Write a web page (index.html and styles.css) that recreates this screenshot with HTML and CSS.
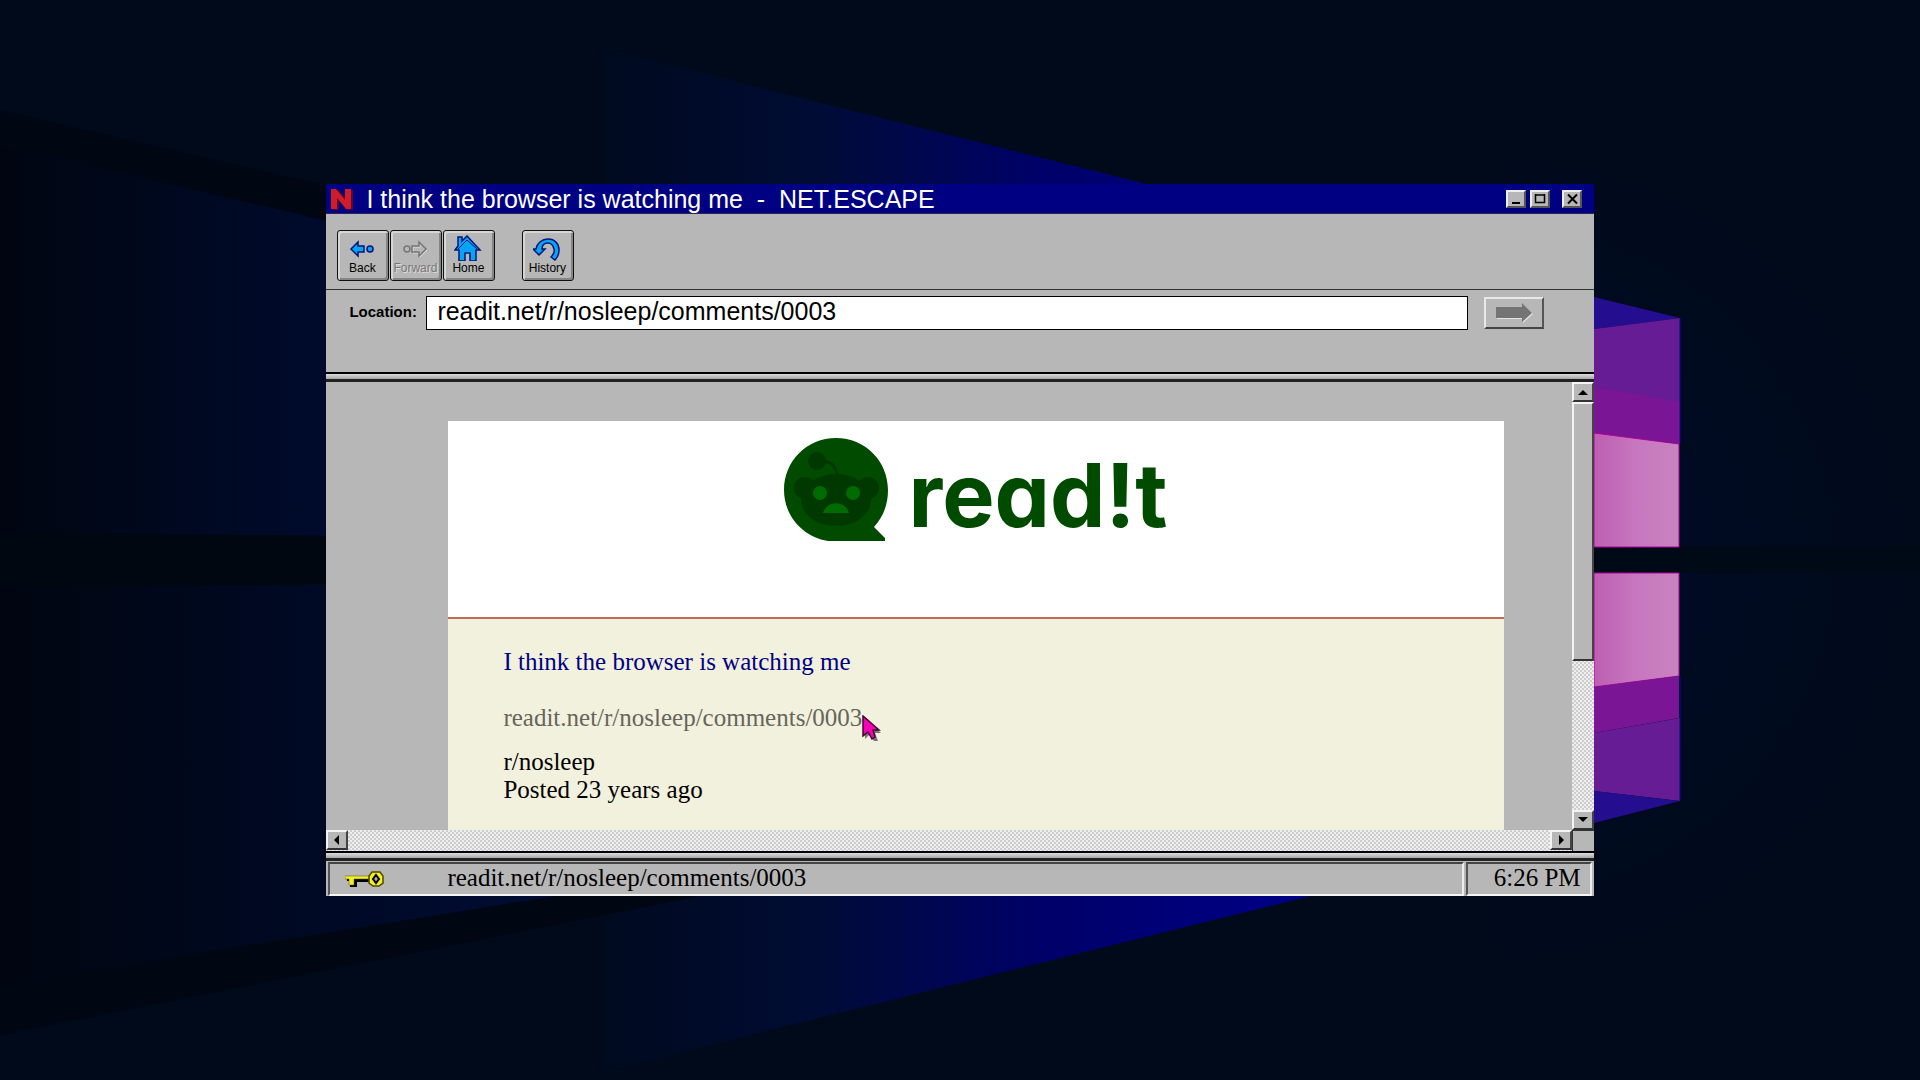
FILE: index.html
```
<!DOCTYPE html>
<html lang="en">
<head>
<meta charset="utf-8">
<title>I think the browser is watching me - NET.ESCAPE</title>
<link rel="stylesheet" href="styles.css">
</head>
<body>
<div class="desktop">
  <svg class="wallpaper" viewBox="0 0 1920 1080" preserveAspectRatio="none" aria-hidden="true">
    <defs>
      <linearGradient id="beam" gradientUnits="userSpaceOnUse" x1="600" y1="0" x2="1320" y2="0">
        <stop offset="0" stop-color="#000a1e"/>
        <stop offset=".3" stop-color="#000c34"/>
        <stop offset=".42" stop-color="#00084a"/>
        <stop offset=".62" stop-color="#000069"/>
        <stop offset="1" stop-color="#000088"/>
      </linearGradient>
      <linearGradient id="left" x1="0" x2="1" y1="0" y2="0">
        <stop offset="0" stop-color="#000510"/>
        <stop offset=".5" stop-color="#000922"/>
        <stop offset="1" stop-color="#000c34"/>
      </linearGradient>
      <linearGradient id="pane" x1="0" x2="1" y1="0" y2="0">
        <stop offset="0" stop-color="#bd5fb3"/>
        <stop offset=".5" stop-color="#c777bf"/>
        <stop offset="1" stop-color="#c884bf"/>
      </linearGradient>
      <radialGradient id="halo" gradientUnits="userSpaceOnUse" cx="1500" cy="560" r="480">
        <stop offset="0" stop-color="#000c30"/>
        <stop offset="1" stop-color="#000a1e" stop-opacity="0"/>
      </radialGradient>
    </defs>
    <rect width="1920" height="1080" fill="#000a1a"/>
    <rect x="1500" width="420" height="1080" fill="url(#halo)"/>
    <path d="M600 48L1311 225V400H600Z" fill="url(#beam)"/>
    <path d="M0 145L410 240V536L0 533Z" fill="url(#left)"/>
    <path d="M0 110L410 205V240L0 145Z" fill="#000713"/>
    <path d="M0 533L326 536V584L0 587Z" fill="#000711"/>
    <path d="M0 587L557 584V896L0 985Z" fill="url(#left)"/>
    <path d="M600 890H1335L600 1072Z" fill="url(#beam)"/>
    <path d="M0 985L557 896H700L0 1035Z" fill="#000713"/>
    <path d="M1594 546H1920V573H1594Z" fill="#000a16"/>
    <path d="M1594 297L1680 318L1594 329Z" fill="#240d8f"/>
    <path d="M1594 329L1680 318V403L1594 388Z" fill="#661c94"/>
    <path d="M1594 387L1680 402V444L1594 433Z" fill="#7a1695"/>
    <path d="M1594 433L1679 444V547H1594Z" fill="url(#pane)" stroke="#b3009c"/>
    <path d="M1594 573H1679V676L1594 687Z" fill="url(#pane)" stroke="#b3009c"/>
    <path d="M1594 687L1679 676V718L1594 733Z" fill="#7a1695"/>
    <path d="M1594 733L1680 718V801L1594 791Z" fill="#661c94"/>
    <path d="M1594 791L1680 801L1594 823Z" fill="#240d8f"/>
    <path d="M1680 318V444M1680 676V801" stroke="#100a90" fill="none"/>
  </svg>

  <main class="window">
    <header class="titlebar">
      <svg class="brand" viewBox="0 0 24 22" aria-hidden="true">
        <path d="M3 2H9L17 12V2H23V22H17L9 12V22H3Z" fill="#5a0730"/>
        <path d="M1 1H6L15 12V1H21V21H16L7 10V21H1Z" fill="#d01c28"/>
      </svg>
      <h1 class="caption">I think the browser is watching me&nbsp; -&nbsp; NET.ESCAPE</h1>
      <div class="controls">
        <button class="control" type="button" aria-label="Minimize"><svg viewBox="0 0 14 12"><path d="M3 10H11" stroke="#000" stroke-width="2"/></svg></button>
        <button class="control" type="button" aria-label="Maximize"><svg viewBox="0 0 14 12"><path d="M2 2H12M2.500 1V9.500H11.500V1" fill="none" stroke="#000" stroke-width="1.500"/></svg></button>
        <button class="control close" type="button" aria-label="Close"><svg viewBox="0 0 14 12"><path d="M3 1.500L12 10.500M12 1.500L3 10.500" stroke="#000" stroke-width="2"/></svg></button>
      </div>
    </header>

    <nav class="toolbar" aria-label="Navigation">
      <button class="tool" type="button">
        <svg viewBox="0 0 28 26"><path d="M3 14L10 7V11H16V17H10V21Z" fill="#08a4f4" stroke="#00147a" stroke-width="1.500"/><circle cx="22" cy="14" r="3" fill="#08a4f4" stroke="#00147a" stroke-width="1.500"/></svg>
        <span>Back</span>
      </button>
      <button class="tool" type="button" disabled>
        <svg viewBox="0 0 28 26"><path d="M26 15L19 8V12H12V18H19V22Z" fill="none" stroke="#ddd"/><g fill="none" stroke="#777" stroke-width="1.500"><path d="M25 14L18 7V11H11V17H18V21Z"/><circle cx="6" cy="14" r="3"/></g></svg>
        <span>Forward</span>
      </button>
      <button class="tool" type="button">
        <svg viewBox="0 0 28 26"><path d="M1 15L4 11V2H8V6L13 1L26 15H22V26H16V18H11V26H5V15Z" fill="#08a4f4" stroke="#00147a" stroke-width="1.500"/><path d="M4 14L13 5L23 14" fill="none" stroke="#00147a"/></svg>
        <span>Home</span>
      </button>
      <button class="tool history" type="button">
        <svg viewBox="0 0 28 26"><path d="M0 14H3C4 8 9 4 15 4C22 4 26 9 26 15C26 20 24 23 22 25L18 22C21 19 22 17 21 14C20 10 18 8 15 8C11 8 9 10 9 14H12L6 20Z" fill="#08a4f4" stroke="#00147a" stroke-width="1.500"/></svg>
        <span>History</span>
      </button>
    </nav>

    <form class="location">
      <label for="url">Location:</label>
      <input id="url" type="text" value="readit.net/r/nosleep/comments/0003">
      <button class="go" type="button" aria-label="Go"><svg viewBox="0 0 38 20"><path d="M2 5H28V1L38 11L28 20V16H2Z" fill="#e4e4e4"/><path d="M1 4H27V0L37 10L27 19V15H1Z" fill="#747474"/></svg></button>
    </form>

    <div class="divider"></div>

    <section class="browser">
      <div class="viewport">
        <article class="page">
          <header class="masthead">
            <svg class="mascot" viewBox="0 0 104 103" aria-hidden="true">
              <path d="M52 0C81 0 104 23 104 52C104 67 99 79 90 89L101 100V103H44C19 99 0 78 0 52C0 23 23 0 52 0Z" fill="#004b00"/>
              <g fill="#003900">
                <ellipse cx="52" cy="62" rx="35" ry="26"/>
                <circle cx="21" cy="50" r="11"/><circle cx="84" cy="50" r="11"/>
                <circle cx="33" cy="23" r="9"/>
              </g>
              <path d="M36 23C48 23 52 28 53 38" fill="none" stroke="#003900" stroke-width="3"/>
              <g fill="#006b00">
                <circle cx="36" cy="55" r="7"/><circle cx="69" cy="55" r="7"/>
                <path d="M39 75C43 62 61 62 65 75Z"/>
              </g>
            </svg>
            <span class="wordmark">read!t</span>
          </header>
          <div class="post">
            <a class="post-title" href="#">I think the browser is watching me</a>
            <p class="post-url">readit.net/r/nosleep/comments/0003<svg class="pointer" viewBox="0 0 20 26" aria-hidden="true"><path d="M3 3V24L8 19L12 26H16L13 18H19Z" fill="#777"/><path d="M1 1V21L6 17L10 24L13 22L11 15H17Z" fill="#f800b8" stroke="#400030" stroke-width="1.500"/></svg></p>
            <p class="post-meta">r/nosleep<br>Posted 23 years ago</p>
          </div>
        </article>
      </div>
      <div class="vscroll">
        <button class="arrow" type="button" aria-label="Scroll up"><svg viewBox="0 0 10 10"><path d="M0 8L5 3L10 8Z"/></svg></button>
        <div class="thumb"></div>
        <button class="arrow down" type="button" aria-label="Scroll down"><svg viewBox="0 0 10 10"><path d="M0 2L5 7L10 2Z"/></svg></button>
      </div>
      <div class="hscroll">
        <button class="arrow" type="button" aria-label="Scroll left"><svg viewBox="0 0 10 10"><path d="M7 0L2 5L7 10Z"/></svg></button>
        <button class="arrow" type="button" aria-label="Scroll right"><svg viewBox="0 0 10 10"><path d="M3 0L8 5L3 10Z"/></svg></button>
      </div>
      <div class="corner"></div>
    </section>

    <div class="divider"></div>

    <footer class="status">
      <div class="cell message">
        <svg class="key" viewBox="0 0 39 17" aria-hidden="true">
          <path d="M2 7H26V11H12V16H5V10H2Z" fill="#000"/>
          <path d="M0 5H24V8H9V14H4V8H0Z" fill="#f4ef20" stroke="#555000" stroke-width=".5"/>
          <path d="M27 1H35L38 5V12L34 15H28L24 12V5Z" fill="#f4ef20" stroke="#4c4900" stroke-width="1.500"/>
          <path d="M31 4L34 8L31 12L28 8Z" fill="#aaa" stroke="#000" stroke-width="2"/>
        </svg>
        <span>readit.net/r/nosleep/comments/0003</span>
      </div>
      <div class="cell clock">6:26 PM</div>
    </footer>
  </main>
</div>
</body>
</html>
```
FILE: styles.css
```
* { box-sizing: border-box; }
body { margin: 0; background: #000a1a; }
button { padding: 0; margin: 0; font: inherit; color: #000; background: #b7b7b7; border: 0; }
svg { display: block; }

.desktop {
  position: relative;
  display: flex;
  min-height: 100vh;
  padding: 184px 17%;
  overflow: hidden;
}
.wallpaper { position: absolute; inset: 0; width: 100%; height: 100%; }

.window {
  position: relative;
  flex: 1;
  min-width: 0;
  display: flex;
  flex-direction: column;
  background: #b7b7b7;
  color: #000;
  font-family: "Liberation Sans", Arial, sans-serif;
}

/* Title bar */
.titlebar {
  display: flex;
  align-items: center;
  height: 30px;
  padding: 0 12px 0 4px;
  background: #000082;
  border-bottom: 1px solid #2c2450;
}
.brand { width: 24px; height: 22px; }
.caption {
  flex: 1;
  margin: 0 0 0 12px;
  font-size: 25px;
  line-height: 32px;
  font-weight: 400;
  color: #fff;
  white-space: nowrap;
}
.controls { display: flex; gap: 4px; }
.control {
  display: grid;
  place-items: center;
  width: 20px;
  height: 18px;
  border: 2px solid;
  border-color: #efefef #555 #555 #efefef;
}
.control svg { width: 14px; height: 12px; }
.close { margin-left: 8px; }

/* Toolbar */
.toolbar {
  display: flex;
  gap: 1px;
  height: 76px;
  padding: 16px 11px 0;
  border-bottom: 1px solid #333;
}
.tool {
  display: flex;
  flex-direction: column;
  align-items: center;
  width: 52px;
  height: 51px;
  padding: 4px 2px 0 0;
  border: 1px solid #111;
  border-radius: 3px;
  box-shadow: inset 2px 2px #d6d6d6, inset -2px -2px #858585;
  font-size: 12px;
  line-height: 14px;
}
.tool svg { width: 28px; height: 26px; }
.tool:disabled { color: #777; text-shadow: 1px 1px #ddd; }
.history { margin-left: 26px; }

/* Location bar */
.location {
  display: flex;
  align-items: flex-start;
  height: 82px;
  padding: 6px 50px 0 23px;
}
.location label { width: 77px; font-size: 15px; font-weight: 700; line-height: 32px; }
.location input {
  flex: 1;
  min-width: 0;
  height: 34px;
  padding: 0 10px 3px;
  border: 1px solid #000;
  border-radius: 0;
  background: #fff;
  color: #000;
  font: 25px "Liberation Sans", Arial, sans-serif;
}
.go {
  display: grid;
  place-items: center;
  width: 60px;
  height: 32px;
  margin: 1px 0 0 16px;
  border: 2px solid;
  border-color: #e8e8e8 #555 #444 #e8e8e8;
}
.go svg { width: 38px; height: 20px; }

.divider {
  height: 10px;
  border-top: 2px solid #000;
  border-bottom: 3px solid #222;
  background: linear-gradient(#e0dce0, #a8a8a8);
}

/* Browser pane */
.browser {
  flex: 1;
  display: grid;
  grid-template-columns: 1fr 22px;
  grid-template-rows: 1fr 21px;
}
.viewport { display: flex; padding: 39px 68px 0 122px; overflow: hidden; }
.page { flex: 1; display: flex; flex-direction: column; }
.masthead {
  display: flex;
  justify-content: center;
  height: 198px;
  padding-top: 17px;
  background: #fff;
  border-bottom: 2px solid #bf6d52;
}
.mascot { width: 104px; height: 103px; }
.wordmark {
  margin-left: 20px;
  color: #004b00;
  font-family: Inter, Lato, sans-serif;
  font-size: 88px;
  font-weight: 700;
  line-height: 114px;
  font-feature-settings: "cv11";
}
.post {
  flex: 1;
  display: flex;
  flex-direction: column;
  align-items: flex-start;
  gap: 28px;
  padding: 29px 55px 0;
  background: #f2f1dd;
  font-family: "Liberation Serif", "Times New Roman", serif;
  font-size: 25px;
  line-height: 28px;
}
.post p { margin: 0; }
.post-title { color: #000082; text-decoration: none; }
.post-url { position: relative; color: #66655c; }
.post .post-meta { margin-top: -12px; }
.pointer { position: absolute; left: 100%; top: 11px; width: 20px; height: 26px; }

/* Scroll bars */
.vscroll, .hscroll {
  display: flex;
  background: repeating-conic-gradient(#eee 0 25%, #cecece 0 50%) 0 0 / 4px 4px;
}
.vscroll { flex-direction: column; }
.hscroll { justify-content: space-between; }
.arrow, .thumb {
  background: #b7b7b7;
  border: 2px solid;
  border-color: #f4f4f4 #444 #333 #f4f4f4;
}
.arrow { display: grid; place-items: center; width: 22px; height: 20px; }
.arrow svg { width: 10px; height: 10px; }
.thumb { height: 259px; }
.down { margin-top: auto; }
.corner { border-top: 1px solid #333; border-left: 1px solid #333; }

/* Status bar */
.status {
  display: flex;
  gap: 2px;
  height: 35px;
  padding: 1px 2px 0;
  font-family: "Liberation Serif", "Times New Roman", serif;
  font-size: 25px;
  line-height: 28px;
}
.cell {
  border: 2px solid;
  border-color: #444 #eee #f4f4f4 #555;
}
.message { flex: 1; display: flex; align-items: flex-start; padding-left: 15px; }
.key { width: 39px; height: 17px; margin: 7px 63px 0 0; }
.clock { width: 126px; padding-right: 9px; text-align: right; }
```
